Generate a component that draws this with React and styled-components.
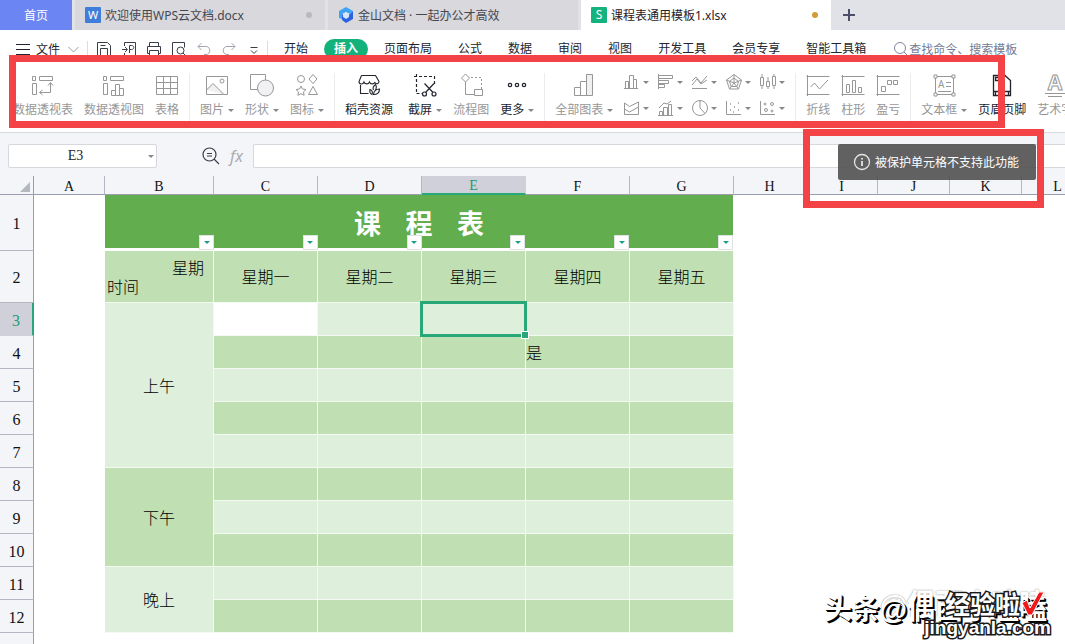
import React, { useState } from "react";
import styled, { createGlobalStyle, css } from "styled-components";

const GlobalStyle = createGlobalStyle`
  * {
    box-sizing: border-box;
  }

  body {
    margin: 0;
    background: #ffffff;
    font-family: "Noto Sans", "Noto Sans CJK SC", sans-serif;
    font-size: 12px;
    color: #22252e;
  }

  button,
  input {
    font: inherit;
    color: inherit;
    border: none;
    background: none;
    padding: 0;
    margin: 0;
  }
`;

const Page = styled.div`
  position: relative;
  width: 100%;
  height: 100vh;
  overflow: hidden;
  display: flex;
  flex-direction: column;
`;

/* ---------- tabs ---------- */

const TabBar = styled.nav`
  display: flex;
  gap: 3px;
  height: 30px;
  flex-shrink: 0;
  background: #e1e2e7;
`;

const HomeTab = styled.button`
  width: 72px;
  flex-shrink: 0;
  background: #6b86f3;
  color: #ffffff;
`;

const Tab = styled.button`
  display: flex;
  align-items: center;
  gap: 4px;
  flex: 0 1 250px;
  min-width: 0;
  padding: 0 13px 0 10px;
  white-space: nowrap;
  background: ${(p) => (p.$active ? "#ffffff" : "#d8d8dd")};
  color: ${(p) => (p.$active ? "#1f2128" : "#454751")};
`;

const Dot = styled.span`
  width: 6px;
  height: 6px;
  margin-left: auto;
  border-radius: 50%;
  background: ${(p) => p.$color};
`;

const NewTab = styled.button`
  display: flex;
  align-items: center;
  padding: 0 6px;
  color: #4c4f68;
`;

/* ---------- menu ---------- */

const MenuBar = styled.div`
  display: flex;
  align-items: center;
  height: 38px;
  flex-shrink: 0;
  padding-left: 15px;
  white-space: nowrap;
`;

const FileButton = styled.button`
  display: flex;
  align-items: center;
  gap: 5px;
  padding-right: 6px;
`;

const QuickTools = styled.div`
  display: flex;
  gap: 9px;
  padding: 0 5px 0 8px;
  border-left: 1px solid #dcdde2;
  border-right: 1px solid #dcdde2;
`;

const ToolButton = styled.button`
  display: flex;
  color: ${(p) => (p.$muted ? "#a3a6b0" : "#3a3e4a")};
`;

const MenuLinks = styled.div`
  display: flex;
  gap: 6px;
  padding: 0 17px 0 6px;
`;

const MenuLink = styled.a`
  height: 20px;
  line-height: 20px;
  padding: 0 10px;
  border-radius: 10px;
  text-decoration: none;
  color: #22252e;
  ${(p) =>
    p.$active &&
    css`
      background: #13b27b;
      color: #ffffff;
      font-weight: bold;
    `}
`;

const Search = styled.label`
  display: flex;
  align-items: center;
  color: #8289a0;
`;

const SearchInput = styled.input`
  width: 120px;
  outline: none;

  &::placeholder {
    color: #737c96;
    opacity: 1;
  }
`;

/* ---------- ribbon ---------- */

const Ribbon = styled.div`
  display: flex;
  align-items: flex-start;
  height: 65px;
  flex-shrink: 0;
  padding: 5px 0 0 3px;
  border-bottom: 1px solid #d9dbdf;
  overflow: hidden;
`;

const Group = styled.div`
  display: flex;
  gap: 11px;
  height: 48px;
  padding: 0 10px;
  flex-shrink: 0;
  border-right: 1px solid #ececf0;
`;

const RibbonButton = styled.button`
  display: flex;
  flex-direction: column;
  align-items: center;
  gap: 4px;
  flex-shrink: 0;
  margin-right: ${(p) => (p.$roomy ? "4px" : "0")};
  color: ${(p) => (p.$enabled ? "#22252e" : "#979797")};
`;

const RibbonLabel = styled.span`
  display: flex;
  align-items: center;
  gap: 4px;
  line-height: 18px;
  white-space: nowrap;
`;

const Arrow = styled.span`
  border: 3px solid transparent;
  border-top-color: ${(p) => p.$color || "#85878d"};
  border-bottom: none;
`;

const ChartGrid = styled.div`
  display: grid;
  grid-template-columns: repeat(5, 26px);
  gap: 8px;
  height: 44px;
  margin-left: -1px;
`;

const ChartButton = styled.button`
  display: flex;
  align-items: center;
  justify-content: space-between;
  height: 18px;
  color: #979797;
`;

/* ---------- formula bar ---------- */

const FormulaBar = styled.div`
  display: flex;
  align-items: center;
  height: 43px;
  flex-shrink: 0;
  padding: 3px 0 0 8px;
  background: #f4f5f8;
`;

const NameBox = styled.div`
  display: flex;
  align-items: center;
  width: 149px;
  height: 24px;
  padding-right: 2px;
  border: 1px solid #d6d8dd;
  border-radius: 2px;
  background: #ffffff;
`;

const NameInput = styled.input`
  flex: 1;
  min-width: 0;
  padding-right: 6px;
  text-align: center;
  font-family: "Liberation Serif", serif;
  font-size: 14px;
  outline: none;
`;

const FormulaTools = styled.div`
  display: flex;
  align-items: center;
  gap: 9px;
  padding: 0 9px 0 45px;
`;

const FxButton = styled.button`
  width: 15px;
  font-size: 16px;
  line-height: 20px;
  font-style: italic;
  color: #a9abb2;
`;

const FormulaInput = styled.input`
  flex: 1;
  height: 24px;
  padding: 0 8px;
  border: 1px solid #d6d8dd;
  border-right: none;
  border-radius: 2px 0 0 2px;
  background: #ffffff;
  outline: none;
`;

/* ---------- sheet ---------- */

const SheetArea = styled.main`
  flex: 1;
  min-height: 0;
  overflow: hidden;
`;

const Sheet = styled.table`
  table-layout: fixed;
  width: 1094px;
  min-width: 100%;
  border-collapse: separate;
  border-spacing: 0;
  font-family: "Liberation Serif", "Noto Sans CJK SC", sans-serif;
  font-size: 16px;
  color: #000000;

  th,
  td {
    padding: 2px 0 0;
  }

  tbody {
    line-height: 19px;
  }

  thead {
    line-height: 15px;
  }
`;

const Corner = styled.td`
  background: #f4f5f8;
  border-right: 1px solid #9a9dae;
  border-bottom: 1px solid #9a9dae;
`;

const Triangle = styled.div`
  margin: 1px 3px 0 auto;
  width: 10px;
  border-left: 10px solid transparent;
  border-bottom: 10px solid #b5b8bf;
`;

const ColumnHead = styled.th`
  height: 19px;
  font-size: 14px;
  font-weight: normal;
  background: ${(p) => (p.$selected ? "#cfd0da" : "#f4f5f8")};
  color: ${(p) => (p.$selected ? "#1d9c72" : "#111111")};
  border-right: 1px solid ${(p) => (p.$selected ? "#cfd0da" : "#b4b7c3")};
  border-bottom: ${(p) =>
    p.$selected ? "2px solid #28a879" : "1px solid #9a9dae"};
`;

const RowHead = styled.th`
  height: ${(p) => p.$height}px;
  font-weight: normal;
  background: ${(p) => (p.$selected ? "#cfd0da" : "#f4f5f8")};
  color: ${(p) => (p.$selected ? "#1d9c72" : "#111111")};
  border-bottom: 1px solid ${(p) => (p.$selected ? "#cfd0da" : "#b4b7c3")};
  border-right: ${(p) =>
    p.$selected ? "2px solid #28a879" : "1px solid #9a9dae"};
`;

const bands = {
  dark: "#c0dfb2",
  light: "#deefdb",
  blank: "#ffffff",
};

const Cell = styled.td`
  position: relative;
  text-align: ${(p) => p.$align || "center"};
  font-weight: 300;
  background: ${(p) => bands[p.$band]};
  border-right: 1px solid #f3faf1;
  border-bottom: 1px solid #f3faf1;
`;

const TitleCell = styled.td`
  position: relative;
  text-align: center;
  background: #62ad4e;
  border-bottom: 3px solid #ffffff;
  border-right: 1px solid #ffffff;
`;

const Title = styled.h1`
  margin: 0;
  font-family: "Noto Sans CJK SC", sans-serif;
  font-size: 27px;
  line-height: 36px;
  font-weight: bold;
  white-space: pre;
  color: #ffffff;
`;

const Filters = styled.div`
  position: absolute;
  inset: auto 0 -2px 0;
  display: grid;
  grid-template-columns: 109px repeat(5, 1fr);
  justify-items: end;
`;

const FilterButton = styled.button`
  display: flex;
  align-items: center;
  justify-content: center;
  width: 15px;
  height: 15px;
  border: 1px solid #dfe3e6;
  background: #ffffff;
`;

const CornerLabels = styled.div`
  display: flex;
  flex-direction: column;
  padding: 0 9px 0 2px;

  span:first-child {
    align-self: flex-end;
  }

  span:last-child {
    align-self: flex-start;
  }
`;

const Selection = styled.div`
  position: absolute;
  inset: -2px;
  z-index: 1;
  border: 3px solid #28a879;

  &::after {
    content: "";
    position: absolute;
    right: -5px;
    bottom: -5px;
    width: 6px;
    height: 6px;
    border: 1px solid #ffffff;
    background: #28a879;
  }
`;

/* ---------- overlays ---------- */

const Marker = styled.div`
  position: absolute;
  z-index: 3;
  left: ${(p) => p.$left}px;
  top: ${(p) => p.$top}px;
  width: ${(p) => p.$width}px;
  height: ${(p) => p.$height}px;
  border: 7px solid #f34346;
  pointer-events: none;
`;

const Toast = styled.div`
  position: absolute;
  z-index: 2;
  left: 838px;
  top: 144px;
  display: flex;
  align-items: center;
  gap: 4px;
  height: 36px;
  padding: 0 17px 0 15px;
  border-radius: 2px;
  background: rgba(84, 84, 84, 0.92);
  color: #ffffff;
  white-space: nowrap;
`;

const Watermark = styled.div`
  position: absolute;
  z-index: 4;
  right: 14px;
  bottom: 4px;
  width: 230px;
  height: 50px;
  font-family: "Liberation Sans", "Noto Sans CJK SC", sans-serif;
  font-weight: bold;
  white-space: nowrap;
`;

const Ghost = styled.span`
  position: absolute;
  right: 4px;
  top: 0;
  display: flex;
  align-items: center;
  gap: 6px;
  font-size: 28px;
  line-height: 30px;
  color: #ffffff;
  text-shadow: 0 0 2px #a5a5a5, 0 0 1px #c8c8c8;
`;

const Author = styled.span`
  position: absolute;
  right: 4px;
  top: 4px;
  font-size: 28px;
  line-height: 32px;
  color: #ffffff;
  text-shadow: 2px 2px 0 #000000, 1px 1px 0 #000000;
`;

const SiteName = styled.span`
  position: absolute;
  right: 31px;
  top: 1px;
  font-size: 25px;
  line-height: 28px;
  color: #ffffff;
  -webkit-text-stroke: 3px #1b1b1b;
  paint-order: stroke fill;
`;

const SiteUrl = styled.span`
  position: absolute;
  right: 0;
  bottom: 2px;
  font-size: 19px;
  line-height: 20px;
  color: #ffffff;
  -webkit-text-stroke: 3px #1b1b1b;
  paint-order: stroke fill;
`;

const Check = styled.svg`
  position: absolute;
  right: 6px;
  top: 0;
`;

/* ---------- icons ---------- */

function Icon({ size = 24, children, ...rest }) {
  return (
    <svg
      width={size}
      height={size}
      viewBox={`0 0 ${size} ${size}`}
      fill="none"
      stroke="currentColor"
      strokeWidth="1"
      aria-hidden="true"
      {...rest}
    >
      {children}
    </svg>
  );
}

const icons = {
  pivotTable: (
    <Icon>
      <path d="M1.500 3.500h3v4h-3zM8.500 3.500h13v4h-13zM1.500 10.500h4v11h-4zM9 19.500h10.500V10M11.500 17l-3 2.500 3 2.500M17 12.500l2.500-3 2.500 3" />
    </Icon>
  ),
  pivotChart: (
    <Icon>
      <path d="M1.500 3.500h3v4h-3zM8.500 3.500h13v4h-13zM1.500 10.500h4v11h-4zM9.500 17.500h4v5h-4zM13.500 11.500h4v11h-4zM17.500 15.500h4v7h-4z" />
    </Icon>
  ),
  table: (
    <Icon>
      <path d="M1.500 3.500h21v18h-21zM1.500 9.500h21M1.500 15.500h21M8.500 3.500v18M15.500 3.500v18" />
    </Icon>
  ),
  picture: (
    <Icon>
      <path d="M1.500 3.500h21v18h-21z" />
      <path d="M1.500 17l6.500-6.500 11 11" fill="#f0f0f2" />
      <circle cx="17" cy="8" r="2" />
    </Icon>
  ),
  shapes: (
    <Icon>
      <path d="M.5 1.500h15v15H.5z" />
      <circle cx="15.500" cy="15" r="8" fill="#f1f1f3" />
    </Icon>
  ),
  iconSet: (
    <Icon>
      <circle cx="6" cy="6" r="3.500" />
      <path d="M18 1.500l4 4.500-4 4.500L14 6zM6 13l1.500 3 3.500.5-2.500 2.400.6 3.400L6 20.600l-3.100 1.700.6-3.400L1 16.500l3.500-.5zM18 13.500l4.500 8h-9z" />
    </Icon>
  ),
  store: (
    <Icon strokeWidth="1.100">
      <path d="M4.500 2.500h14l3.500 6c0 2.500-3 3-4 1M4.500 2.500L2 8.500c0 3 4 3.500 5 .5 1 2.500 4.500 2.500 5.500 0 1 2.500 4.500 2.500 5.500 0M3.500 12v8.500h8" />
      <path d="M15 21.500c-2-1-2.500-3-2-5 2 .5 3 2.500 2 5zM16.500 17c-1-2 0-4 2-5.500 1.500 2 1 4-.5 6.500M16.500 21.500c0-3 2.500-5.500 6-5.500 0 3-2 5.500-6 5.500z" />
    </Icon>
  ),
  screenshot: (
    <Icon strokeWidth="1.200">
      <path
        d="M3.500 1v20M1 3.500h20.500v8M3.500 20.500h6"
        strokeDasharray="3 2"
      />
      <path d="M11.500 10.500l8.500 9M21 10.500l-8.500 9" />
      <circle cx="11.500" cy="21" r="2" />
      <circle cx="21" cy="21" r="2" />
    </Icon>
  ),
  flow: (
    <Icon>
      <path d="M6.500 1l4 4-4 4-4-4zM6.500 9v12.500h9M15.500 16.500h8v6h-8z" />
      <path d="M12 4.500h10.500V16" strokeDasharray="2 2" />
    </Icon>
  ),
  more: (
    <Icon strokeWidth="1.200">
      <circle cx="5" cy="12" r="1.700" />
      <circle cx="12" cy="12" r="1.700" />
      <circle cx="19" cy="12" r="1.700" />
    </Icon>
  ),
  allCharts: (
    <Icon>
      <path d="M2.500 14.500h6v8h-6zM8.500 8.500h6v14h-6z" />
      <path d="M14.500 1.500h6v21h-6z" fill="#f0f0f2" />
    </Icon>
  ),
  sparkLine: (
    <Icon>
      <path d="M.5 3.500h23M.5 21.500h23M1.500 2v21M4.500 14l4-4 5 6L22 7" />
    </Icon>
  ),
  sparkColumn: (
    <Icon>
      <path d="M.5 3.500h23M.5 21.500h23M1.500 2v21M5.500 11.500h3v8h-3zM11.500 7.500h3v12h-3zM17.500 14.500h3v5h-3z" />
    </Icon>
  ),
  winLoss: (
    <Icon>
      <path d="M.5 3.500h23M.5 21.500h23M1.500 2v21M5.500 13.500h4v5h-4zM11.500 7.500h4v4h-4zM17.500 7.500h4v4h-4z" />
    </Icon>
  ),
  textBox: (
    <Icon>
      <path d="M3.500 3.500h18v18h-18zM14 9.500h5M14 13.500h5M6 18.500h13" />
      <path
        d="M2 2h3v3H2zM20 2h3v3h-3zM2 20h3v3H2zM20 20h3v3h-3z"
        fill="#ffffff"
      />
      <text x="6" y="15" fontSize="10" fill="currentColor" stroke="none">
        A
      </text>
    </Icon>
  ),
  headerFooter: (
    <Icon strokeWidth="1.300">
      <path d="M3.500 2.500h11.500l5.500 5v15h-17zM5.500 4.500h4v3h-4zM3.500 18.500h17M5.500 18.500v4M18.500 18.500v4" />
    </Icon>
  ),
  wordArt: (
    <Icon>
      <text
        x="12"
        y="17"
        fontSize="21"
        textAnchor="middle"
        fontFamily="Open Sans, sans-serif"
        fontWeight="bold"
      >
        A
      </text>
      <path d="M2 20.500h20M5 23.500h14" />
    </Icon>
  ),
};

const chartIcons = [
  {
    name: "柱形图",
    drawing: (
      <path d="M1 15.500h14M2.500 8.500h3v7h-3zM6.500 2.500h4v13h-4zM10.500 6.500h3v9h-3z" />
    ),
  },
  {
    name: "条形图",
    drawing: (
      <path d="M1.500 1v15M1.500 2.500h14v3h-14zM1.500 7.500h10v3h-10zM1.500 11.500h6v3h-6z" />
    ),
  },
  {
    name: "折线图",
    drawing: (
      <path d="M1 8l4-4 5 6 6-7M1 12l5-6 4 5 6-4M1 15.500h15" />
    ),
  },
  {
    name: "雷达图",
    drawing: (
      <path d="M9 1.500l7.500 5.500-3 9h-9l-3-9zM9 5l4.500 3.500-1.500 5H6L4.500 8.500zM9 1.500V10M1.500 7L9 10l7.500-3M4.500 16L9 10l4.500 6" />
    ),
  },
  {
    name: "股价图",
    drawing: (
      <path d="M1.500 4.500h3v8h-3zM7.500 8.500h3v5h-3zM13.500 3.500h3v9h-3zM3 1v3M3 13v3M9 4v4M9 14v2M15 1v2M15 13v3" />
    ),
  },
  {
    name: "面积图",
    drawing: (
      <path d="M1.500 15.500V4l5 3.500L15.500 3v12.500zM1.500 10l5 3 9-5" />
    ),
  },
  {
    name: "组合图",
    drawing: (
      <path d="M1 16.500h15M2.500 12.500h3v4h-3zM6.500 8.500h4v8h-4zM11.500 5.500h3v11h-3zM2 9l5-5 3 1 4-3" />
    ),
  },
  {
    name: "饼图",
    drawing: (
      <>
        <circle cx="9" cy="9" r="7.500" />
        <path d="M9 1.500V9l5 5.500" />
      </>
    ),
  },
  {
    name: "散点图",
    drawing: (
      <>
        <path d="M1.500 2v13.500H16" />
        <path
          d="M5 5h1M9 8h1M13 4h1M5 11h1M8 13h1M13 11h1"
          strokeWidth="1.500"
        />
      </>
    ),
  },
  {
    name: "气泡图",
    drawing: (
      <>
        <path d="M1.500 2v13.500H16" />
        <circle cx="6" cy="5" r="1" />
        <circle cx="7" cy="11" r="1.500" />
        <circle cx="13" cy="5" r="1.500" />
        <circle cx="13" cy="12" r="1" />
      </>
    ),
  },
];

const quickTools = [
  {
    name: "保存",
    drawing: (
      <path d="M1.500 14.500v-13h10l3 3v10zM4.500 14.500v-7h7v7M4.500 4.500h5" />
    ),
  },
  {
    name: "输出为PDF",
    drawing: (
      <path d="M3.500 5V1.500h11v13h-11V12M1 8.500h5M4 6l2.500 2.500L4 11M8.500 12V4.500h2c3 0 3 4 0 4h-2" />
    ),
  },
  {
    name: "打印",
    drawing: (
      <path d="M3.500 5.500v-4h9v4M3.500 12.500h-2v-7h13v7h-2M3.500 9.500h9v5h-9z" />
    ),
  },
  {
    name: "打印预览",
    drawing: (
      <>
        <path d="M5 14.500H1.500v-13h12v5M12 12l2.500 2.500" />
        <circle cx="9.500" cy="9.500" r="3.500" />
      </>
    ),
  },
  {
    name: "撤销",
    muted: true,
    drawing: <path d="M5.500 2L2 5.500 5.500 9M2 5.500h8c5 0 5 8 0 8H8" />,
  },
  {
    name: "恢复",
    muted: true,
    drawing: <path d="M10.500 2L14 5.500 10.500 9M14 5.500H6c-5 0-5 8 0 8h2" />,
  },
  { name: "更多工具", drawing: <path d="M4.500 6.500h7M5 9.500l3 3 3-3" /> },
];

/* ---------- data ---------- */

const menus = [
  "开始",
  "插入",
  "页面布局",
  "公式",
  "数据",
  "审阅",
  "视图",
  "开发工具",
  "会员专享",
  "智能工具箱",
];

const columns = ["A", "B", "C", "D", "E", "F", "G", "H", "I", "J", "K", "L"];
const columnWidths = [71, 109, 104, 104, 104, 104, 104, 72, 72, 72, 72];
const weekdays = ["星期一", "星期二", "星期三", "星期四", "星期五"];
const lessonColumns = ["C", "D", "E", "F", "G"];
const rows = [3, 4, 5, 6, 7, 8, 9, 10, 11, 12];
const periods = {
  3: { label: "上午", span: 5, band: "light" },
  8: { label: "下午", span: 3, band: "dark" },
  11: { label: "晚上", span: 2, band: "light" },
};

function RibbonItem({ icon, label, arrow, enabled, roomy }) {
  return (
    <RibbonButton type="button" $enabled={enabled} $roomy={roomy}>
      {icons[icon]}
      <RibbonLabel>
        {label}
        {arrow && <Arrow />}
      </RibbonLabel>
    </RibbonButton>
  );
}

function Tabs() {
  return (
    <TabBar>
      <HomeTab type="button">首页</HomeTab>
      <Tab type="button">
        <svg width="16" height="16" viewBox="0 0 16 16" aria-hidden="true">
          <rect width="16" height="16" rx="1" fill="#3f7ddb" />
          <text x="8" y="12" fontSize="11" textAnchor="middle" fill="#ffffff">
            W
          </text>
        </svg>
        欢迎使用WPS云文档.docx
        <Dot $color="#b9b9c0" />
      </Tab>
      <Tab type="button">
        <svg width="16" height="16" viewBox="0 0 16 16" aria-hidden="true">
          <path d="M8 0l7 4-3 3-4-2-4 2v5l-3-1V4z" fill="#3fa3f5" />
          <path d="M15 4v8l-7 4-4-3V7l4 3 4-3z" fill="#2b62e0" />
          <path d="M8 5l3 2v3l-3 2-3-2V7z" fill="#d8e6fb" />
        </svg>
        金山文档 · 一起办公才高效
      </Tab>
      <Tab type="button" $active>
        <svg width="16" height="16" viewBox="0 0 16 16" aria-hidden="true">
          <rect width="16" height="16" rx="1" fill="#14b37d" />
          <text x="8" y="12" fontSize="12" textAnchor="middle" fill="#ffffff">
            S
          </text>
        </svg>
        课程表通用模板1.xlsx
        <Dot $color="#d39a3c" />
      </Tab>
      <NewTab type="button" aria-label="新建">
        <Icon size={18} strokeWidth="2">
          <path d="M9 3v12M3 9h12" />
        </Icon>
      </NewTab>
    </TabBar>
  );
}

function Menu() {
  return (
    <MenuBar>
      <FileButton type="button">
        <Icon size={16}>
          <path d="M1 3.500h14M1 8.500h14M1 13.500h14" />
        </Icon>
        文件
        <Icon size={16} color="#9a9ca5">
          <path d="M3.500 6l5 5 5-5" />
        </Icon>
      </FileButton>
      <QuickTools>
        {quickTools.map((tool) => (
          <ToolButton
            key={tool.name}
            type="button"
            aria-label={tool.name}
            $muted={tool.muted}
          >
            <Icon size={16}>{tool.drawing}</Icon>
          </ToolButton>
        ))}
      </QuickTools>
      <MenuLinks>
        {menus.map((name) => (
          <MenuLink key={name} href="#" $active={name === "插入"}>
            {name}
          </MenuLink>
        ))}
      </MenuLinks>
      <Search>
        <Icon size={16}>
          <circle cx="7" cy="7" r="5.500" />
          <path d="M11 11l3.500 3.500" />
        </Icon>
        <SearchInput type="text" placeholder="查找命令、搜索模板" />
      </Search>
    </MenuBar>
  );
}

function InsertRibbon() {
  return (
    <Ribbon>
      <Group>
        <RibbonItem icon="pivotTable" label="数据透视表" />
        <RibbonItem icon="pivotChart" label="数据透视图" />
        <RibbonItem icon="table" label="表格" />
      </Group>
      <Group>
        <RibbonItem icon="picture" label="图片" arrow />
        <RibbonItem icon="shapes" label="形状" arrow />
        <RibbonItem icon="iconSet" label="图标" arrow />
      </Group>
      <Group>
        <RibbonItem icon="store" label="稻壳资源" enabled roomy />
        <RibbonItem icon="screenshot" label="截屏" arrow enabled />
        <RibbonItem icon="flow" label="流程图" />
        <RibbonItem icon="more" label="更多" arrow enabled />
      </Group>
      <Group>
        <RibbonItem icon="allCharts" label="全部图表" arrow />
        <ChartGrid>
          {chartIcons.map((chart) => (
            <ChartButton key={chart.name} type="button" aria-label={chart.name}>
              <Icon size={18}>{chart.drawing}</Icon>
              <Arrow />
            </ChartButton>
          ))}
        </ChartGrid>
      </Group>
      <Group>
        <RibbonItem icon="sparkLine" label="折线" />
        <RibbonItem icon="sparkColumn" label="柱形" />
        <RibbonItem icon="winLoss" label="盈亏" />
      </Group>
      <Group>
        <RibbonItem icon="textBox" label="文本框" arrow />
        <RibbonItem icon="headerFooter" label="页眉页脚" enabled />
        <RibbonItem icon="wordArt" label="艺术字" />
      </Group>
    </Ribbon>
  );
}

function Timetable() {
  return (
    <Sheet>
      <colgroup>
        <col style={{ width: 34 }} />
        {columnWidths.map((width, i) => (
          <col key={columns[i]} style={{ width }} />
        ))}
        <col />
      </colgroup>
      <thead>
        <tr>
          <Corner>
            <Triangle />
          </Corner>
          {columns.map((name) => (
            <ColumnHead key={name} $selected={name === "E"}>
              {name}
            </ColumnHead>
          ))}
        </tr>
      </thead>
      <tbody>
        <tr>
          <RowHead $height={56}>1</RowHead>
          <td />
          <TitleCell colSpan={6}>
            <Title>课    程    表</Title>
            <Filters>
              {["B", ...lessonColumns].map((name) => (
                <FilterButton
                  key={name}
                  type="button"
                  aria-label={`筛选 ${name}`}
                >
                  <Arrow $color="#1d9c8a" />
                </FilterButton>
              ))}
            </Filters>
          </TitleCell>
        </tr>
        <tr>
          <RowHead $height={52}>2</RowHead>
          <td />
          <Cell $band="dark">
            <CornerLabels>
              <span>星期</span>
              <span>时间</span>
            </CornerLabels>
          </Cell>
          {weekdays.map((day) => (
            <Cell key={day} $band="dark">
              {day}
            </Cell>
          ))}
        </tr>
        {rows.map((row) => {
          const period = periods[row];
          return (
            <tr key={row}>
              <RowHead $height={33} $selected={row === 3}>
                {row}
              </RowHead>
              <td />
              {period && (
                <Cell rowSpan={period.span} $band={period.band}>
                  {period.label}
                </Cell>
              )}
              {lessonColumns.map((col) => {
                const key = col + row;
                const band = row % 2 ? "light" : "dark";
                return (
                  <Cell
                    key={key}
                    $band={key === "C3" ? "blank" : band}
                    $align="left"
                  >
                    {key === "F4" && "是"}
                    {key === "E3" && <Selection />}
                  </Cell>
                );
              })}
            </tr>
          );
        })}
        <tr>
          <RowHead $height={33} />
        </tr>
      </tbody>
    </Sheet>
  );
}

function App() {
  const [cell, setCell] = useState("E3");
  const [formula, setFormula] = useState("");

  return (
    <>
      <GlobalStyle />
      <Page>
        <Tabs />
        <Menu />
        <InsertRibbon />
        <FormulaBar>
          <NameBox>
            <NameInput
              type="text"
              aria-label="名称框"
              value={cell}
              onChange={(e) => setCell(e.target.value)}
            />
            <button type="button" aria-label="选择名称">
              <Arrow as="div" />
            </button>
          </NameBox>
          <FormulaTools>
            <ToolButton type="button" aria-label="查找">
              <Icon size={18} strokeWidth="1.200">
                <circle cx="7.500" cy="7.500" r="6.500" />
                <path d="M12 12l5 5M5 6.500h5M5 9h5" />
              </Icon>
            </ToolButton>
            <FxButton type="button">fx</FxButton>
          </FormulaTools>
          <FormulaInput
            type="text"
            aria-label="编辑栏"
            value={formula}
            onChange={(e) => setFormula(e.target.value)}
          />
        </FormulaBar>
        <SheetArea>
          <Timetable />
        </SheetArea>

        <Toast role="status">
          <Icon size={18} color="#e4e4e4" strokeWidth="1.300">
            <circle cx="9" cy="9" r="7.500" />
            <path d="M9 8v5M9 5v1.500" strokeWidth="1.800" />
          </Icon>
          被保护单元格不支持此功能
        </Toast>
        <Marker $left={9} $top={55} $width={996} $height={73} />
        <Marker $left={803} $top={129} $width={241} $height={79} />

        <Watermark>
          <Ghost>
            <Icon size={20} color="#cfcfcf">
              <circle cx="10" cy="13" r="5" />
              <circle cx="3.500" cy="10" r="2" />
              <circle cx="7" cy="4.500" r="2" />
              <circle cx="13" cy="4.500" r="2" />
              <circle cx="16.500" cy="10" r="2" />
            </Icon>
            @偶西小嗑嗑
          </Ghost>
          <Author>头条@偶西小嗑嗑</Author>
          <SiteName>经验啦</SiteName>
          <SiteUrl>jingyanla.com</SiteUrl>
          <Check width="24" height="26" viewBox="0 0 24 26" aria-hidden="true">
            <path
              d="M1 13l5-3 3 8L18 2h5L11 25H7z"
              fill="#f01818"
              stroke="#ffffff"
              strokeWidth="1"
            />
          </Check>
        </Watermark>
      </Page>
    </>
  );
}

export default App;
